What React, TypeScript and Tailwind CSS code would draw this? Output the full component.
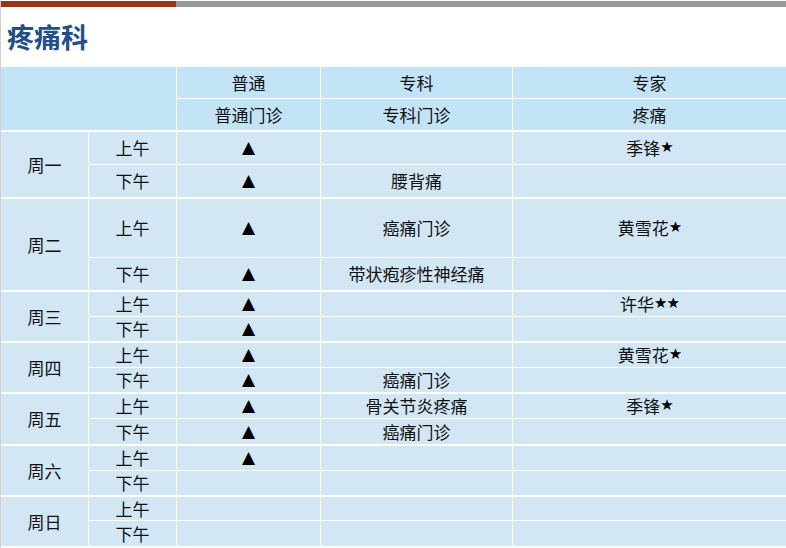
import React from "react";

const COLS = "grid-cols-[87px_87px_143px_191px_273px]";

type Half = { label: string; gen: boolean; spec: string; expert: string; h: string };
type Day = { day: string; rows: [Half, Half] };

const days: Day[] = [
  {
    day: "周一",
    rows: [
      { label: "上午", gen: true, spec: "", expert: "季锋★", h: "h-[32px]" },
      { label: "下午", gen: true, spec: "腰背痛", expert: "", h: "h-[32px]" },
    ],
  },
  {
    day: "周二",
    rows: [
      { label: "上午", gen: true, spec: "癌痛门诊", expert: "黄雪花★", h: "h-[58px]" },
      { label: "下午", gen: true, spec: "带状疱疹性神经痛", expert: "", h: "h-[32px]" },
    ],
  },
  {
    day: "周三",
    rows: [
      { label: "上午", gen: true, spec: "", expert: "许华★★", h: "h-[24px]" },
      { label: "下午", gen: true, spec: "", expert: "", h: "h-[24px]" },
    ],
  },
  {
    day: "周四",
    rows: [
      { label: "上午", gen: true, spec: "", expert: "黄雪花★", h: "h-[24px]" },
      { label: "下午", gen: true, spec: "癌痛门诊", expert: "", h: "h-[24px]" },
    ],
  },
  {
    day: "周五",
    rows: [
      { label: "上午", gen: true, spec: "骨关节炎疼痛", expert: "季锋★", h: "h-[24px]" },
      { label: "下午", gen: true, spec: "癌痛门诊", expert: "", h: "h-[25px]" },
    ],
  },
  {
    day: "周六",
    rows: [
      { label: "上午", gen: true, spec: "", expert: "", h: "h-[24px]" },
      { label: "下午", gen: false, spec: "", expert: "", h: "h-[24px]" },
    ],
  },
  {
    day: "周日",
    rows: [
      { label: "上午", gen: false, spec: "", expert: "", h: "h-[23px]" },
      { label: "下午", gen: false, spec: "", expert: "", h: "h-[25px]" },
    ],
  },
];

function Expert({ text }: { text: string }) {
  if (!text) return null;
  const idx = text.indexOf("★");
  const name = idx >= 0 ? text.slice(0, idx) : text;
  const stars = idx >= 0 ? text.slice(idx) : "";
  return (
    <span className="flex items-center">
      {name}
      {stars && (
        <span className="font-['DejaVu_Sans',sans-serif] text-[15px] tracking-[-1px] text-black">{stars}</span>
      )}
    </span>
  );
}

const cell = "bg-[#d2e6f4] flex items-center justify-center leading-none pb-px";

export default function App() {
  return (
    <div className="w-[786px] h-[548px] box-border border-l border-[#cfcfcf] bg-white text-[17px] text-[#111] font-['Noto_Sans_CJK_SC','Microsoft_YaHei',sans-serif] overflow-hidden">
      <div className="flex h-[6px] mt-px">
        <div className="w-[175px] bg-[#983512]" />
        <div className="flex-1 bg-[#999999]" />
      </div>
      <div className="h-[60px] flex items-center pl-[6px] pb-[2px]">
        <span className="text-[27px] font-bold text-[#224f87] leading-none">疼痛科</span>
      </div>
      <div className="flex flex-col gap-[2px] bg-white">
        <div className="grid grid-cols-[175px_143px_191px_273px] grid-rows-[31px_31px] gap-px">
          <div className="row-span-2 bg-[#c3e4f7]" />
          <div className="bg-[#c3e4f7] flex items-center justify-center">普通</div>
          <div className="bg-[#c3e4f7] flex items-center justify-center">专科</div>
          <div className="bg-[#c3e4f7] flex items-center justify-center">专家</div>
          <div className="bg-[#c3e4f7] flex items-center justify-center">普通门诊</div>
          <div className="bg-[#c3e4f7] flex items-center justify-center">专科门诊</div>
          <div className="bg-[#c3e4f7] flex items-center justify-center">疼痛</div>
        </div>
        {days.map((d) => (
          <div key={d.day} className={`grid ${COLS} gap-px`}>
            <div className={`${cell} row-span-2`}>{d.day}</div>
            {d.rows.map((r, i) => (
              <React.Fragment key={i}>
                <div className={`${cell} ${r.h}`}>{r.label}</div>
                <div className={cell}>
                  {r.gen && <span className="font-['DejaVu_Sans',sans-serif] text-[17px] text-black">▲</span>}
                </div>
                <div className={cell}>{r.spec}</div>
                <div className={cell}>
                  <Expert text={r.expert} />
                </div>
              </React.Fragment>
            ))}
          </div>
        ))}
      </div>
    </div>
  );
}
